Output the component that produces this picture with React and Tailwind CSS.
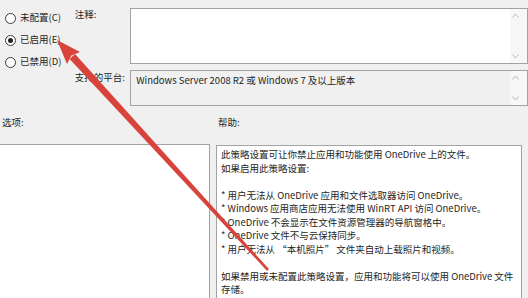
import React from 'react';

const helpLines = [
    '此策略设置可让你禁止应用和功能使用 OneDrive 上的文件。',
    '如果启用此策略设置:',
    '',
    '* 用户无法从 OneDrive 应用和文件选取器访问 OneDrive。',
    '* Windows 应用商店应用无法使用 WinRT API 访问 OneDrive。',
    '* OneDrive 不会显示在文件资源管理器的导航窗格中。',
    '* OneDrive 文件不与云保持同步。',
    '* 用户无法从 “本机照片” 文件夹自动上载照片和视频。',
    '',
    '如果禁用或未配置此策略设置，应用和功能将可以使用 OneDrive 文件',
    '存储。',
];

const Radio = ({ label, checked }) => (
    <div className="flex items-center h-[22px] gap-[4px]">
        <span className="w-[11px] h-[11px] rounded-full border border-[#3a3a3a] bg-white flex items-center justify-center">
            {checked && <span className="w-[5px] h-[5px] rounded-full bg-[#222]" />}
        </span>
        <span>{label}</span>
    </div>
);

const ScrollArrows = () => (
    <div className="w-[17px] h-full flex flex-col justify-between items-start py-[4px] pl-[2px] bg-[#f7f7f7]">
        <svg width="7" height="5" viewBox="0 0 7 5">
            <path d="M0.5 4.5 L3.5 1 L6.5 4.5" fill="none" stroke="#b8b8b8" strokeWidth="1" />
        </svg>
        <svg width="7" height="5" viewBox="0 0 7 5">
            <path d="M0.5 0.5 L3.5 4 L6.5 0.5" fill="none" stroke="#b8b8b8" strokeWidth="1" />
        </svg>
    </div>
);

const Arrow = () => (
    <svg className="absolute inset-0 pointer-events-none" width="528" height="298" viewBox="0 0 528 298">
        {/* shaft, tapering toward the end */}
        <polygon points="69.6,59.0 75.0,54.0 268.9,269.1 267.1,270.9" fill="#d8443b" />
        {/* head */}
        <polygon points="57,40 80,52 71.3,55.4 67,64" fill="#d8443b" />
    </svg>
);

const App = () => {
    return (
        <div className="relative w-[528px] h-[298px] overflow-hidden bg-[#f0f0f0] text-[#1e1e1e] text-[9.5px] leading-[13.5px] font-['Noto_Sans_CJK_SC',sans-serif]">
            {/* top: state radios, comment, platform */}
            <div className="flex h-[106px]">
                <div className="w-[77px] pt-[7px] pl-[5px] flex flex-col">
                    <Radio label="未配置(C)" />
                    <Radio label="已启用(E)" checked />
                    <Radio label="已禁用(D)" />
                </div>
                <div className="w-[57px] flex flex-col">
                    <div className="h-[70px] pt-[8px]">注释:</div>
                    <div className="pt-[1px]">支持的平台:</div>
                </div>
                <div className="w-[410px] pt-[8px] flex flex-col gap-[6px]">
                    <div className="h-[56px] flex border border-[#a3a3a3] bg-white">
                        <div className="flex-1" />
                        <ScrollArrows />
                    </div>
                    <div className="h-[36px] flex border border-[#a3a3a3] bg-[#f0f0f0]">
                        <div className="flex-1 pl-[5px] pt-[3px] whitespace-nowrap">Windows Server 2008 R2 或 Windows 7 及以上版本</div>
                        <ScrollArrows />
                    </div>
                </div>
            </div>

            {/* section labels */}
            <div className="flex h-[38px] pt-[10px]">
                <div className="w-[216px] pl-[2px]">选项:</div>
                <div className="pl-[2px]">帮助:</div>
            </div>

            {/* options + help panels */}
            <div className="flex gap-[6px] h-[154px]">
                <div className="w-[210px] h-full bg-white border-t border-r border-[#a3a3a3]" />
                <div className="w-[306px] h-full mt-[1px] bg-white border-t border-x border-[#a3a3a3] pl-[4px] pt-[2px]">
                    {helpLines.map((line, i) => (
                        <div key={i} className="h-[13.5px] whitespace-nowrap">{line}</div>
                    ))}
                </div>
            </div>

            <Arrow />
        </div>
    );
};

export default App;
